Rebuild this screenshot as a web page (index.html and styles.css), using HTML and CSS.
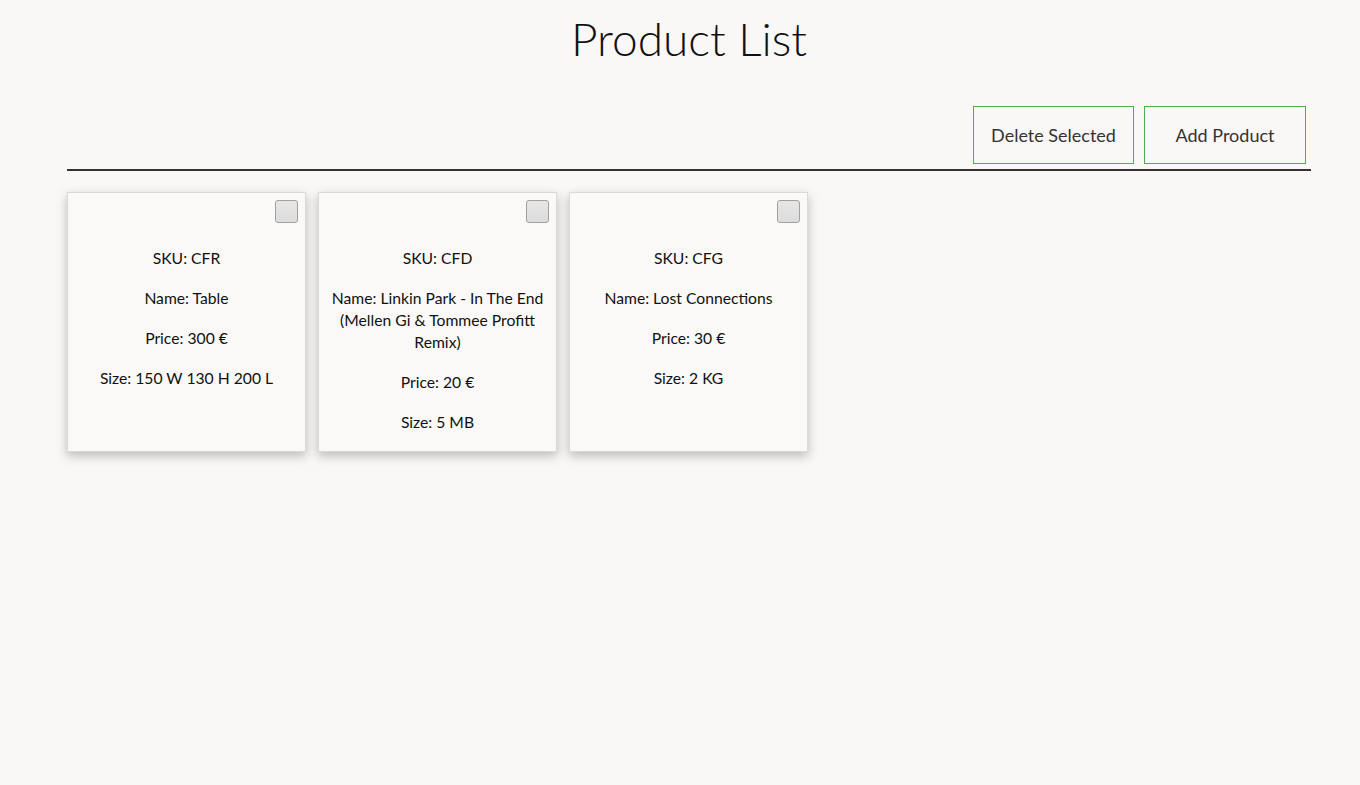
FILE: index.html
```html
<!DOCTYPE html>
<html lang="en">
<head>
<meta charset="utf-8">
<title>Product List</title>
<link rel="stylesheet" href="styles.css">
</head>
<body>
<main class="page">
  <h1 class="title">Product List</h1>
  <div class="toolbar">
    <button class="btn">Delete Selected</button>
    <button class="btn">Add Product</button>
  </div>
  <hr class="divider">
  <section class="grid">
    <article class="card">
      <div class="card-top"><span class="check"></span></div>
      <p>SKU: CFR</p>
      <p>Name: Table</p>
      <p>Price: 300 €</p>
      <p>Size: 150 W 130 H 200 L</p>
    </article>
    <article class="card">
      <div class="card-top"><span class="check"></span></div>
      <p>SKU: CFD</p>
      <p>Name: Linkin Park - In The End (Mellen Gi &amp; Tommee Profitt Remix)</p>
      <p>Price: 20 €</p>
      <p>Size: 5 MB</p>
    </article>
    <article class="card">
      <div class="card-top"><span class="check"></span></div>
      <p>SKU: CFG</p>
      <p>Name: Lost Connections</p>
      <p>Price: 30 €</p>
      <p>Size: 2 KG</p>
    </article>
  </section>
</main>
</body>
</html>
```
FILE: styles.css
```css
* { box-sizing: border-box; }
html, body { margin: 0; padding: 0; }
body {
  background: #f9f8f7;
  font-family: Lato, "Open Sans", sans-serif;
  color: #111;
  min-height: 100vh;
}
.page {
  padding: 0 49px 40px 67px;
}
.title {
  margin: 0;
  padding-top: 12px;
  height: 106px;
  text-align: center;
  font-weight: 300;
  font-size: 46px;
  line-height: 54px;
  color: #111;
}
.toolbar {
  display: flex;
  justify-content: flex-end;
  gap: 10px;
  padding-right: 5px;
}
.btn {
  height: 58px;
  border: 1px solid #4caf50;
  background: transparent;
  font-family: inherit;
  font-size: 18px;
  color: #333;
  padding: 0 16px;
}
.btn:first-child { width: 161px; }
.btn:last-child { width: 162px; }
.divider {
  margin: 5px 0 0;
  border: 0;
  border-top: 2px solid #333;
}
.grid {
  display: grid;
  grid-template-columns: repeat(3, 239px);
  gap: 12px;
  margin-top: 21px;
}
.card {
  background: #faf9f8;
  border: 1px solid #d9d9d9;
  box-shadow: 0 4px 10px rgba(0,0,0,0.25);
  padding: 7px 7px 18px;
  text-align: center;
  font-size: 15.7px;
  line-height: 22px;
  min-height: 260px;
}
.card-top {
  display: flex;
  justify-content: flex-end;
  height: 22px;
  margin-bottom: 25px;
}
.check {
  width: 23px;
  height: 23px;
  border: 1px solid #a0a0a0;
  border-radius: 3px;
  background: linear-gradient(#e6e6e6, #dcdcdc);
}
.card p {
  margin: 0 0 18px;
}
.card p:last-child { margin-bottom: 0; }
```
